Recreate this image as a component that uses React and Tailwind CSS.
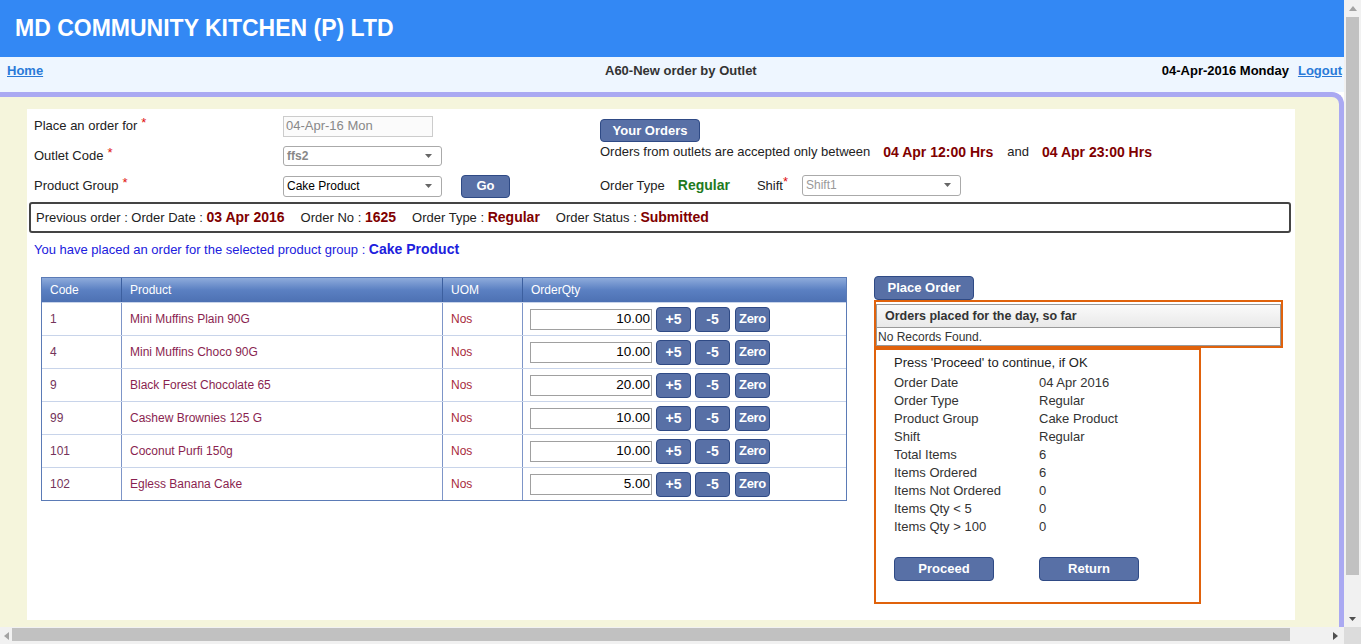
import React from 'react';

const rows = [
  { code: '1', name: 'Mini Muffins Plain 90G', qty: '10.00' },
  { code: '4', name: 'Mini Muffins Choco 90G', qty: '10.00' },
  { code: '9', name: 'Black Forest Chocolate 65', qty: '20.00' },
  { code: '99', name: 'Cashew Brownies 125 G', qty: '10.00' },
  { code: '101', name: 'Coconut Purfi 150g', qty: '10.00' },
  { code: '102', name: 'Egless Banana Cake', qty: '5.00' },
];

const summary = [
  ['Order Date', '04 Apr 2016'],
  ['Order Type', 'Regular'],
  ['Product Group', 'Cake Product'],
  ['Shift', 'Regular'],
  ['Total Items', '6'],
  ['Items Ordered', '6'],
  ['Items Not Ordered', '0'],
  ['Items Qty < 5', '0'],
  ['Items Qty > 100', '0'],
];

function Btn({ children, className = '' }) {
  return (
    <div
      className={`flex items-center justify-center rounded-[4px] border border-[#2f4a85] bg-[#5870a6] font-bold text-white ${className}`}
    >
      {children}
    </div>
  );
}

function Caret({ color = '#555' }) {
  return (
    <svg width="7" height="4" viewBox="0 0 7 4">
      <path d="M0 0h7L3.5 4z" fill={color} />
    </svg>
  );
}

function Select({ value, className = '', textClass = '' }) {
  return (
    <div
      className={`flex items-center justify-between rounded-[3px] border border-[#aaa] bg-white pl-[3px] pr-[9px] text-[12px] ${className}`}
    >
      <span className={textClass}>{value}</span>
      <Caret color="#666" />
    </div>
  );
}

function Star() {
  return <span className="relative -top-[3px] ml-[4px] text-[13px] text-[#e01010]">*</span>;
}

export default function App() {
  return (
    <div
      className="flex h-[644px] w-[1361px] flex-col overflow-hidden bg-white text-[#222]"
      style={{ fontFamily: '"Liberation Sans", Arial, sans-serif' }}
    >
      <div className="flex min-h-0 flex-1">
        <div className="flex w-[1344px] flex-col">
          {/* header */}
          <div className="flex h-[57px] items-center bg-[#3388f4] pl-[15px]">
            <h1 className="text-[23px] font-bold leading-none text-white">MD COMMUNITY KITCHEN (P) LTD</h1>
          </div>

          {/* nav */}
          <div className="flex h-[35px] items-start bg-[#eef6ff] pl-[7px] pr-[2px] pt-[6px] text-[13px] font-bold leading-[15px]">
            <a className="w-[598px] text-[#2a7ad8] underline">Home</a>
            <span className="text-[#333]">A60-New order by Outlet</span>
            <span className="flex-1" />
            <span className="text-black">04-Apr-2016 Monday</span>
            <a className="ml-[9px] text-[#2a7ad8] underline">Logout</a>
          </div>

          {/* frame */}
          <div className="min-h-0 flex-1 rounded-tr-[12px] border-r-[5px] border-t-[5px] border-[#aaa9f2] bg-[#f5f5dc] pl-[27px] pt-[12px]">
            <div className="h-[511px] w-[1268px] bg-white">
              {/* top form */}
              <div className="flex h-[91px]">
                <div className="w-[573px] pl-[7px] pt-[2px] text-[13px]">
                  <div className="flex h-[30px] items-center">
                    <div className="w-[249px]">
                      Place an order for<Star />
                    </div>
                    <div className="flex h-[21px] w-[150px] items-center border border-[#ccc] bg-[#fbfbfb] pl-[2px] text-[#888]">
                      04-Apr-16 Mon
                    </div>
                  </div>
                  <div className="flex h-[30px] items-center">
                    <div className="w-[249px]">
                      Outlet Code<Star />
                    </div>
                    <Select value="ffs2" className="h-[20px] w-[159px]" textClass="font-bold text-[#888]" />
                  </div>
                  <div className="flex h-[30px] items-center">
                    <div className="w-[249px]">
                      Product Group<Star />
                    </div>
                    <Select value="Cake Product" className="h-[21px] w-[159px]" textClass="text-black" />
                    <Btn className="ml-[19px] h-[23px] w-[49px] text-[13px]">Go</Btn>
                  </div>
                </div>

                <div className="flex flex-col text-[13px]">
                  <Btn className="mt-[10px] h-[23px] w-[100px] text-[13px]">Your Orders</Btn>
                  <div className="mt-[2px] flex h-[17px] items-center">
                    <span>Orders from outlets are accepted only between</span>
                    <span className="ml-[13px] text-[14px] font-bold text-[#800000]">04 Apr 12:00 Hrs</span>
                    <span className="ml-[14px]">and</span>
                    <span className="ml-[13px] text-[14px] font-bold text-[#800000]">04 Apr 23:00 Hrs</span>
                  </div>
                  <div className="mt-[10px] flex h-[30px] items-center">
                    <span>Order Type</span>
                    <span className="ml-[13px] text-[14px] font-bold text-[#1e7a1e]">Regular</span>
                    <span className="ml-[27px]">Shift</span>
                    <span className="relative -top-[4px] text-[13px] text-[#e01010]">*</span>
                    <Select value="Shift1" className="ml-[14px] h-[21px] w-[159px]" textClass="text-[#999]" />
                  </div>
                </div>
              </div>

              {/* previous order */}
              <div className="ml-[2px] mt-[2px] flex h-[31px] w-[1262px] items-center rounded-[3px] border-2 border-[#444] pl-[5px] text-[13px]">
                <span className="mr-[16px]">
                  Previous order : Order Date : <b className="text-[14px] text-[#800000]">03 Apr 2016</b>
                </span>
                <span className="mr-[16px]">
                  Order No : <b className="text-[14px] text-[#800000]">1625</b>
                </span>
                <span className="mr-[16px]">
                  Order Type : <b className="text-[14px] text-[#800000]">Regular</b>
                </span>
                <span>
                  Order Status : <b className="text-[14px] text-[#800000]">Submitted</b>
                </span>
              </div>

              <div className="mt-[8px] h-[16px] pl-[7px] text-[13px] leading-[16px] text-[#2020dd]">
                You have placed an order for the selected product group : <b className="text-[14px]">Cake Product</b>
              </div>

              {/* main */}
              <div className="mt-[20px] flex items-start pl-[14px]">
                <div className="w-[806px] border border-[#5b7bb6] text-[12px]">
                  <div className="flex h-[24px] bg-gradient-to-b from-[#8eabdb] via-[#5b80c2] to-[#4d71b3] text-white">
                    <div className="flex w-[80px] items-center border-r border-[#3c5f9f] pl-[8px]">Code</div>
                    <div className="flex w-[321px] items-center border-r border-[#3c5f9f] pl-[8px]">Product</div>
                    <div className="flex w-[80px] items-center border-r border-[#3c5f9f] pl-[8px]">UOM</div>
                    <div className="flex flex-1 items-center pl-[8px]">OrderQty</div>
                  </div>
                  {rows.map((r) => (
                    <div key={r.code} className="flex h-[33px] border-t border-[#c8d4ea]">
                      <div className="flex w-[80px] items-center border-r border-[#7d95c8] pl-[8px] text-[#74335a]">
                        {r.code}
                      </div>
                      <div className="flex w-[321px] items-center border-r border-[#7d95c8] pl-[8px] text-[#8a1f50]">
                        {r.name}
                      </div>
                      <div className="flex w-[80px] items-center border-r border-[#7d95c8] pl-[8px] text-[#a82a3c]">
                        Nos
                      </div>
                      <div className="flex flex-1 items-center gap-[4px] pl-[7px]">
                        <div className="flex h-[21px] w-[122px] items-center justify-end border border-[#a0a0a0] pr-[1px] text-[13.5px] text-black">
                          {r.qty}
                        </div>
                        <Btn className="h-[25px] w-[35px] text-[14px]">+5</Btn>
                        <Btn className="h-[25px] w-[35px] text-[14px]">-5</Btn>
                        <Btn className="ml-[1px] h-[25px] w-[35px] text-[13px] tracking-tight">Zero</Btn>
                      </div>
                    </div>
                  ))}
                </div>

                <div className="-mt-[1px] ml-[27px] flex flex-col">
                  <Btn className="h-[24px] w-[100px] text-[13px]">Place Order</Btn>
                  <div className="w-[409px] border-2 border-[#e0620c] pt-[2px]">
                    <div className="flex h-[24px] items-center border border-[#999] bg-gradient-to-b from-[#fafafa] to-[#e9e9e9] pl-[8px] text-[12.5px] font-bold text-[#333]">
                      Orders placed for the day, so far
                    </div>
                    <div className="flex h-[18px] items-center border border-t-0 border-[#999] pl-[1px] text-[12px] text-[#333]">
                      No Records Found.
                    </div>
                  </div>
                  <div className="h-[256px] w-[327px] border-2 border-[#e0620c] pl-[18px] pt-[4px] text-[13px] text-[#222]">
                    <div className="h-[18px] leading-[18px]">Press 'Proceed' to continue, if OK</div>
                    <div className="mt-[2px]">
                      {summary.map(([k, v]) => (
                        <div key={k} className="flex h-[18px] items-center text-[#333]">
                          <span className="w-[145px]">{k}</span>
                          <span>{v}</span>
                        </div>
                      ))}
                    </div>
                    <div className="mt-[21px] flex gap-[45px]">
                      <Btn className="h-[24px] w-[100px] text-[13px]">Proceed</Btn>
                      <Btn className="h-[24px] w-[100px] text-[13px]">Return</Btn>
                    </div>
                  </div>
                </div>
              </div>
            </div>
          </div>
        </div>

        {/* vertical scrollbar */}
        <div className="flex w-[17px] flex-col bg-[#f1f1f1]">
          <div className="flex h-[17px] items-center justify-center">
            <svg width="8" height="5" viewBox="0 0 8 5">
              <path d="M0 5h8L4 0z" fill="#a3a3a3" />
            </svg>
          </div>
          <div className="mx-[2px] h-[558px] bg-[#c1c1c1]" />
          <div className="flex-1" />
          <div className="flex h-[17px] items-center justify-center">
            <Caret color="#505050" />
          </div>
        </div>
      </div>

      {/* horizontal scrollbar */}
      <div className="flex h-[17px] bg-[#f1f1f1]">
        <div className="flex w-[12px] items-center justify-center">
          <svg width="5" height="8" viewBox="0 0 5 8">
            <path d="M5 0v8L0 4z" fill="#a3a3a3" />
          </svg>
        </div>
        <div className="my-[1px] mb-[3px] w-[1278px] bg-[#c1c1c1]" />
        <div className="flex-1" />
        <div className="flex w-[17px] items-center justify-center">
          <svg width="5" height="8" viewBox="0 0 5 8">
            <path d="M0 0v8L5 4z" fill="#505050" />
          </svg>
        </div>
        <div className="w-[17px] bg-[#dcdcdc]" />
      </div>
    </div>
  );
}
